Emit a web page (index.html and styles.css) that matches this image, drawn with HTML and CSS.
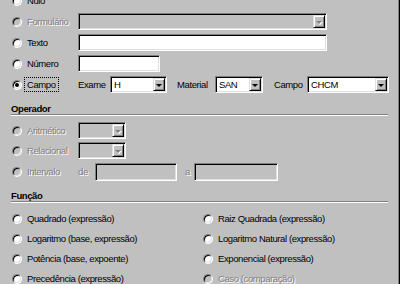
FILE: index.html
```html
<!DOCTYPE html>
<html lang="pt">
<head>
    <meta charset="UTF-8">
    <meta name="viewport" content="width=device-width, initial-scale=1.0">
    <title>Expressão</title>
    <link rel="stylesheet" href="styles.css">
</head>
<body>
    <div class="panel">
        <!-- Tipo de valor -->
        <div class="rows top">
            <div class="row">
                <label class="opt"><span class="radio"></span>Nulo</label>
            </div>
            <div class="row">
                <label class="opt off"><span class="radio"></span>Formulário</label>
                <div class="select off w-long"><span class="value"></span><span class="btn"><i></i></span></div>
            </div>
            <div class="row">
                <label class="opt"><span class="radio"></span>Texto</label>
                <div class="field w-long"></div>
            </div>
            <div class="row">
                <label class="opt"><span class="radio"></span>Número</label>
                <div class="field w-num"></div>
            </div>
            <div class="row">
                <label class="opt"><span class="radio on"></span><span class="focus">Campo</span></label>
                <span class="lbl l-exame">Exame</span>
                <div class="select w-exame"><span class="value">H</span><span class="btn"><i></i></span></div>
                <span class="lbl l-material">Material</span>
                <div class="select w-material"><span class="value">SAN</span><span class="btn"><i></i></span></div>
                <span class="lbl l-campo">Campo</span>
                <div class="select w-campo"><span class="value">CHCM</span><span class="btn"><i></i></span></div>
            </div>
        </div>

        <!-- Operador -->
        <h2 class="group">Operador</h2>
        <div class="rows ops">
            <div class="row">
                <label class="opt off"><span class="radio"></span>Aritmético</label>
                <div class="select off w-op"><span class="value"></span><span class="btn"><i></i></span></div>
            </div>
            <div class="row">
                <label class="opt off"><span class="radio"></span>Relacional</label>
                <div class="select off w-op"><span class="value"></span><span class="btn"><i></i></span></div>
            </div>
            <div class="row tall">
                <label class="opt off"><span class="radio"></span>Intervalo</label>
                <span class="lbl off l-de">de</span>
                <div class="field off w-de"></div>
                <span class="lbl off l-a">a</span>
                <div class="field off w-a"></div>
            </div>
        </div>

        <!-- Função -->
        <h2 class="group fn">Função</h2>
        <div class="functions">
            <label class="opt"><span class="radio"></span>Quadrado (expressão)</label>
            <label class="opt"><span class="radio"></span>Raiz Quadrada (expressão)</label>
            <label class="opt"><span class="radio"></span>Logaritmo (base, expressão)</label>
            <label class="opt"><span class="radio"></span>Logaritmo Natural (expressão)</label>
            <label class="opt"><span class="radio"></span>Potência (base, expoente)</label>
            <label class="opt"><span class="radio"></span>Exponencial (expressão)</label>
            <label class="opt"><span class="radio"></span>Precedência (expressão)</label>
            <label class="opt off"><span class="radio"></span>Caso (comparação)</label>
        </div>
    </div>
</body>
</html>
```

FILE: styles.css
```css
body {
    margin: 0;
    background-color: #c0c0c0;
    font-family: "Liberation Sans", Arial, sans-serif;
    font-size: 9.5px;
    letter-spacing: -0.4px;
    color: #000;
}

.panel {
    width: 400px;
    height: 284px;
    box-sizing: border-box;
    padding: 0 11px 0 12px;
    border-right: 1px solid #000;
    box-shadow: inset -1px 0 #808080;
    overflow: hidden;
}

.rows.top {
    margin-top: -8px;
}

.row {
    display: flex;
    align-items: center;
    height: 17px;
    margin-bottom: 4px;
}

.ops .row {
    margin-bottom: 3px;
}

.row.tall {
    height: 19px;
}

.opt {
    display: flex;
    align-items: center;
    gap: 5px;
    width: 66px;
    flex: none;
    white-space: nowrap;
}

.off {
    color: #808080;
    text-shadow: 1px 1px #fff;
}

/* radio button */
.radio {
    position: relative;
    width: 10px;
    height: 10px;
    box-sizing: border-box;
    flex: none;
    border-radius: 50%;
    border: 1px solid;
    border-color: #808080 #fff #fff #808080;
    background-color: #fff;
    box-shadow: inset 1px 1px #000, inset -1px -1px #dfdfdf;
}

.off .radio {
    background-color: #c0c0c0;
}

.radio.on::after {
    content: "";
    position: absolute;
    left: 2px;
    top: 2px;
    width: 4px;
    height: 4px;
    border-radius: 50%;
    background-color: #000;
}

.focus {
    outline: 1px dotted #000;
    outline-offset: 1px;
    padding: 0 1px;
    margin-left: -1px;
}

/* sunken boxes */
.field,
.select {
    height: 17px;
    box-sizing: border-box;
    border: 1px solid;
    border-color: #808080 #fff #fff #808080;
    box-shadow: inset 1px 1px #000, inset -1px -1px #dfdfdf;
    background-color: #fff;
    flex: none;
}

.row.tall .field {
    height: 18px;
}

.field.off,
.select.off {
    background-color: #c0c0c0;
}

.select {
    display: flex;
    padding: 1px;
}

.select .value {
    flex: 1;
    padding-left: 2px;
    line-height: 13px;
}

.select .btn {
    width: 12px;
    box-sizing: border-box;
    border: 1px solid;
    border-color: #dfdfdf #000 #000 #dfdfdf;
    box-shadow: inset 1px 1px #fff, inset -1px -1px #808080;
    background-color: #c0c0c0;
    display: flex;
    align-items: center;
    justify-content: center;
}

.select .btn i {
    width: 0;
    height: 0;
    border-left: 3px solid transparent;
    border-right: 3px solid transparent;
    border-top: 3px solid #000;
    margin-top: 1px;
}

.select.off .btn i {
    border-top-color: #808080;
    filter: drop-shadow(1px 1px 0 #fff);
}

.w-long { width: 249px; }
.w-num { width: 82px; }
.w-exame { width: 57px; }
.w-material { width: 48px; }
.w-campo { width: 82px; }
.w-op { width: 48px; }
.w-de { width: 82px; }
.w-a { width: 84px; }

.lbl {
    flex: none;
    white-space: nowrap;
}

.l-exame { width: 32px; }
.l-material { width: 38px; margin-left: 10px; }
.l-campo { width: 33px; margin-left: 11px; }
.l-de { width: 17px; }
.l-a { width: 9px; margin-left: 8px; }

/* group headings */
.group {
    margin: 10px 0 7px -1px;
    font-size: 9.5px;
    font-weight: bold;
    line-height: 11px;
    border-bottom: 1px solid #808080;
    box-shadow: 0 1px #fff;
}

.group.fn {
    margin-top: 9px;
    margin-bottom: 8px;
}

.functions {
    display: grid;
    grid-template-columns: 191px 1fr;
    grid-auto-rows: 17px;
    row-gap: 3px;
}

.functions .opt {
    width: auto;
}
```
